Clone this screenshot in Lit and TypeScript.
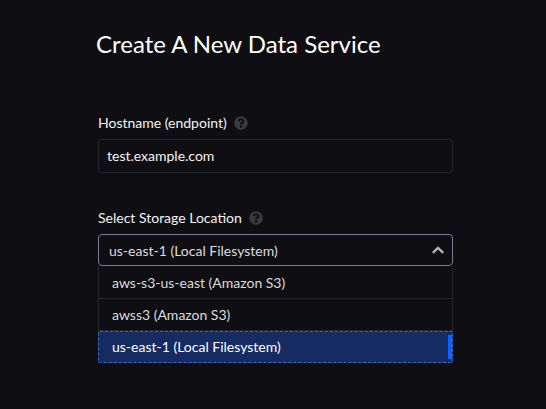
import { LitElement, html, css, svg } from "lit";
import { customElement, property, state } from "lit/decorators.js";
import { classMap } from "lit/directives/class-map.js";

@customElement("help-icon")
export class HelpIcon extends LitElement {
  @property() label = "Help";

  static styles = css`
    :host {
      display: block;
      width: 14px;
      height: 14px;
    }
    .icon {
      display: block;
      width: 14px;
      height: 14px;
    }
  `;

  render() {
    return html`<svg class="icon" viewBox="0 0 512 512" role="img" aria-label=${this.label}>
      ${svg`<path fill="#3a3a3c" d="M504 256c0 136.997-111.043 248-248 248S8 392.997 8 256C8 119.083 119.043 8 256 8s248 111.083 248 248zM262.655 90c-54.497 0-89.255 22.957-116.549 63.758-3.536 5.286-2.353 12.415 2.715 16.258l34.699 26.31c5.205 3.947 12.621 3.008 16.665-2.122 17.864-22.658 30.113-35.797 57.303-35.797 20.429 0 45.698 13.148 45.698 32.958 0 14.976-12.363 22.667-32.534 33.976C247.128 238.528 216 254.941 216 296v4c0 6.627 5.373 12 12 12h56c6.627 0 12-5.373 12-12v-1.333c0-28.462 83.186-29.647 83.186-106.667 0-58.002-60.165-102-116.531-102zM256 338c-25.365 0-46 20.635-46 46 0 25.364 20.635 46 46 46s46-20.636 46-46c0-25.365-20.635-46-46-46z"/>`}
    </svg>`;
  }
}

@customElement("app-root")
export class AppRoot extends LitElement {
  @state() private locations = [
    "aws-s3-us-east (Amazon S3)",
    "awss3 (Amazon S3)",
    "us-east-1 (Local Filesystem)",
  ];
  @state() private selected = "us-east-1 (Local Filesystem)";

  static styles = css`
    :host {
      display: block;
      min-height: 100vh;
      box-sizing: border-box;
      padding: 28px 93px 28px 96px;
      background: #0f0e13;
      color: #f4f4f4;
      font-family: Lato, "Liberation Sans", sans-serif;
      font-size: 14px;
      line-height: 20px;
    }
    .title {
      margin: 0;
      font-size: 24px;
      line-height: 32px;
      font-weight: 400;
      color: #ffffff;
    }
    .form {
      display: flex;
      flex-direction: column;
      gap: 35px;
      margin-top: 53px;
      padding-left: 2px;
    }
    .caption {
      display: flex;
      align-items: center;
      gap: 7px;
      margin-bottom: 6px;
    }
    .box {
      display: block;
      width: 100%;
      box-sizing: border-box;
      margin: 0;
      border: 1px solid #262529;
      border-radius: 4px;
      background: #0f0e13;
      color: #f4f4f4;
      font: inherit;
      outline: none;
    }
    .text {
      height: 34px;
      padding: 0 8px 2px;
    }
    .picker {
      display: grid;
      align-items: center;
    }
    .picker > * {
      grid-area: 1 / 1;
    }
    .select {
      appearance: none;
      height: 32px;
      padding: 2px 32px 0 10px;
      border-color: #7d7a93;
      color: #dcdcde;
    }
    .chevron {
      justify-self: end;
      width: 14px;
      height: 8px;
      margin-right: 8px;
      pointer-events: none;
    }
    .options {
      margin: 0;
      padding: 1px 0 0;
      list-style: none;
      border: 1px solid #262529;
      border-width: 0 1px;
    }
    .option {
      display: flex;
      align-items: center;
      height: 32px;
      box-sizing: border-box;
      padding: 0 0 0 13px;
      border-bottom: 1px solid #262529;
      color: #dcdcde;
      cursor: pointer;
    }
    .option.chosen {
      margin: 0 -1px;
      border: 1px dashed #3a66c4;
      border-radius: 2px;
      background: #152b61;
      color: #ffffff;
    }
    .marker {
      width: 4px;
      height: 24px;
      margin-left: auto;
      background: #0f62fe;
    }
  `;

  render() {
    return html`
      <h1 class="title">Create A New Data Service</h1>
      <form class="form">
        <div>
          <div class="caption">
            <label for="hostname">Hostname (endpoint)</label>
            <help-icon label="About the hostname"></help-icon>
          </div>
          <input class="box text" id="hostname" type="text" value="test.example.com" />
        </div>
        <div>
          <div class="caption">
            <label for="location">Select Storage Location</label>
            <help-icon label="About storage locations"></help-icon>
          </div>
          <div class="picker">
            <select
              class="box select"
              id="location"
              @change=${(e: Event) => (this.selected = (e.target as HTMLSelectElement).value)}
            >
              ${this.locations.map(
                (name) => html`<option .selected=${name === this.selected}>${name}</option>`
              )}
            </select>
            <svg class="chevron" viewBox="0 0 14 8" aria-hidden="true">
              <path d="M1.8 6.8 L7 1.9 L12.2 6.8" fill="none" stroke="#b4b4b4" stroke-width="2.3" />
            </svg>
          </div>
          <ul class="options" role="listbox" aria-label="Storage locations">
            ${this.locations.map((name) => {
              const chosen = name === this.selected;
              return html`<li
                class=${classMap({ option: true, chosen })}
                role="option"
                aria-selected=${chosen ? "true" : "false"}
                @click=${() => (this.selected = name)}
              >
                ${name}${chosen ? html`<span class="marker"></span>` : null}
              </li>`;
            })}
          </ul>
        </div>
      </form>
    `;
  }
}
